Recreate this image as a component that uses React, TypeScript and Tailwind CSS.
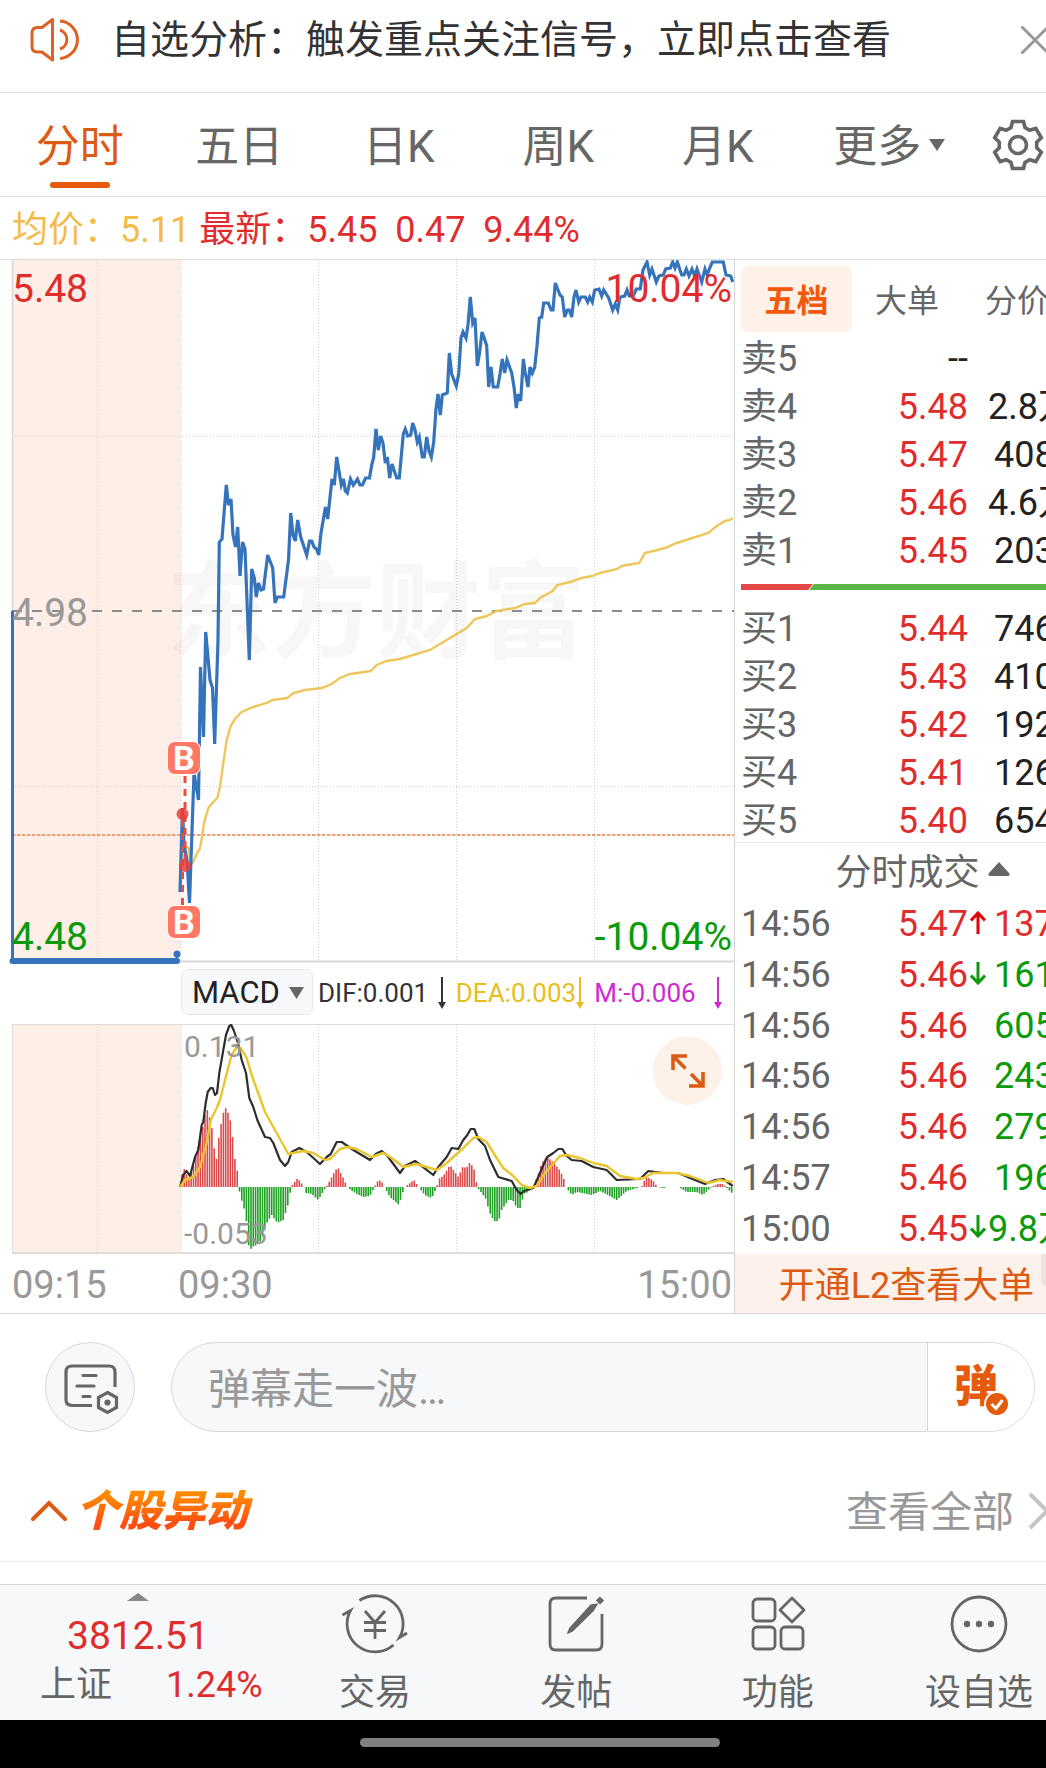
import { useState } from 'react';

interface Quote {
  label: string;
  price: string;
  volume: string;
}

interface Tick {
  time: string;
  price: string;
  volume: string;
  side: 'buy' | 'sell';
  move?: 'up' | 'down';
}

const periods = ['分时', '五日', '日K', '周K', '月K', '更多'];

const asks: Quote[] = [
  { label: '卖5', price: '--', volume: '' },
  { label: '卖4', price: '5.48', volume: '2.8万' },
  { label: '卖3', price: '5.47', volume: '408' },
  { label: '卖2', price: '5.46', volume: '4.6万' },
  { label: '卖1', price: '5.45', volume: '203' },
];

const bids: Quote[] = [
  { label: '买1', price: '5.44', volume: '746' },
  { label: '买2', price: '5.43', volume: '410' },
  { label: '买3', price: '5.42', volume: '192' },
  { label: '买4', price: '5.41', volume: '126' },
  { label: '买5', price: '5.40', volume: '654' },
];

const ticks: Tick[] = [
  { time: '14:56', price: '5.47', volume: '137', side: 'buy', move: 'up' },
  { time: '14:56', price: '5.46', volume: '161', side: 'sell', move: 'down' },
  { time: '14:56', price: '5.46', volume: '605', side: 'sell' },
  { time: '14:56', price: '5.46', volume: '243', side: 'sell' },
  { time: '14:56', price: '5.46', volume: '279', side: 'sell' },
  { time: '14:57', price: '5.46', volume: '196', side: 'sell' },
  { time: '15:00', price: '5.45', volume: '9.8万', side: 'sell', move: 'down' },
];

const indicators = [
  { text: 'DIF:0.001', color: 'text-[#333333]' },
  { text: 'DEA:0.003', color: 'text-[#e8be1c]' },
  { text: 'M:-0.006', color: 'text-[#cc2bd0]' },
];

// Chart series, in chart units: x 0-734, y from the top of each pane
const priceLine =
  '180,632 182.5,548 184,585 187,600 189.5,643 194,513 198.5,540 200.5,407 203.5,477 205.7,372 210,420 212.5,428 214.7,484 218,380 219.3,282 222,279 226.3,225 228.5,245 231,239 233,275 235.5,287 237.7,267 240,316 242.5,282 245,289 249.3,400 251.7,309 254.3,318 256.3,337 258.5,323 261,330 263.5,329 267.7,295 272.7,308 275,343 277.5,337 283.7,337 288.5,300 290.7,253 293,275 295.3,281 297.7,260 300.7,277 306.7,295 309.5,281 311.7,281 314,287 316.5,289 318.7,295 321,273 325.5,247 327.7,259 332,219 334.3,225 336.7,197 341.3,225 343.5,219 345.3,231 347.3,233 350.5,219 353.3,225 357.5,219 360,225 362.5,225 365.5,218 369.5,218 371.7,205 373.7,197 376,169 378.3,190 380.7,176 383,183 385.3,203 387.3,197 389.7,218 392,204 396.7,218 399.3,218 403.3,174 405.3,169 407.7,176 410.7,175 412.7,163 415,170 417.3,182 419.3,177 422.3,197 424.3,197 426.7,177 429,191 431.3,197 433.7,182 436,149 438,134 440.3,155 442.3,135 447.3,133 449.3,93 451.7,114 456.3,126 458.7,114 461,78 463,72 466,78 468,65 470.3,37 472.7,63 475,58 477.3,106 479.7,92 482,72 484.3,78 486.7,86 488.7,127 491,107 493.3,127 497.7,127 500,114 502.3,99 504.7,113 507,100 511.7,113 514,127 516.3,148 518.3,134 520.7,141 523.3,99 525.3,113 528,127 530,107 532.3,113 534.7,107 537,86 539.3,58 541.7,57 543.7,43 548.3,43 551,50 553,50 555.3,23 560,35 562.3,37 564.7,57 567.3,50 569.3,50 571.7,57 574,37 576,30 578.7,42 581,37 585.3,37 587.7,42 589.7,37 592.3,42 594.7,30 599,29 601.7,36 603.7,30 608.7,38 612.7,50 615.3,44 617.7,50 620,37 624.7,36 627,30 629.3,36 633.3,36 636.3,29 640.3,29 643,10 647,2 649.7,15 652,9 656.3,22 659,16 663.3,15 665.7,9 670.3,8 672.7,2 675,8 677.3,2 681.7,15 684,15 686.3,9 689,16 692,9 694.7,16 697,9 701.7,22 705,9 707.3,15 709.7,8 712.3,2 723.3,2 726,15 730.7,16 732.7,22';

const averageLine =
  '185,587 188.5,588 190.5,602 192.7,603 196.7,594 200,588 202,577 204,563 208.3,548 213.3,542 217.3,538 220,527 223.3,503 226.7,480 230.7,466 235,459 241.7,452 253.3,447 266.7,443 272.7,440 287.3,438 293.3,433 305,430 321.7,428 331.7,424 340,418 350,414 370.7,411 376.7,405 386.7,401 400,399 430,390 436.7,386 456.7,374 466.7,368 475,359 486.7,356 496.7,351 515,348 525,344 535,343 540,338 552.7,331 557.3,325 570,322 581.7,318 592.3,316 600,313 617.3,309 621.7,306 639.3,303 645,293 653.3,291 665,288 676.7,283 708.3,273 716.7,266 725,261 730,260 732.7,258';

const difLine =
  '180,163 183.3,151 186.7,147 190,152 195,133 198.3,126 201.7,101 203.3,98 205.7,79 207.7,68 210.7,64 212.7,64 215,71 217,69 219.3,49 223.3,26 226,11 229.3,2 231.3,1 234,7 237.7,18 241.7,36 246,49 249.3,74 253.3,83 257.3,96 265,113 270,114 273.3,119 280,136 285,142 288.3,138 291.7,128 299.3,124 306.7,128 320,140 326.7,133 330.7,130 336.7,118 341.7,118 353.3,126 370,136 375.7,130 381.7,127 386.7,131 400,149 405,142 415,137 421.7,142 433.3,151 438.3,143 446.7,133 451.7,124 458.3,125 463.3,116 467.3,111 470.7,105 474.3,105 478.3,115 485,122 490,136 498.3,153 511.7,157 516.7,166 520.7,170 524,167 533.3,164 538.3,153 543.3,141 547.3,133 553.3,129 558.3,125 562.3,125 566.7,132 571.7,136 581.7,137 593.3,143 606.7,146 616.7,156 640,155 648.3,147 663.3,149 678.3,149 690,154 705,160 715,156 723.3,155 732.7,162';

const deaLine =
  '180,163 185,156 193.3,153 200,143 206.7,119 210.7,96 216.7,84 220,76 225,56 231.7,31 236.7,23 240.7,24 246.7,34 251.7,51 265,88 275,106 288.3,130 303.3,127 313.3,129 325,136 330,135 340,125 346.7,123 356.7,125 371.7,133 383.3,129 391.7,134 403.3,143 416.7,140 436.7,146 446.7,139 456.7,130 463.3,124 473.3,114 478.3,113 486.7,118 496.7,134 503.3,144 513.3,152 521.7,161 530,164 536.7,162 545,149 560,132 566.7,131 580,134 593.3,139 606.7,142 620,152 636.7,155 643.3,154 653.3,149 676.7,149 690,152 708.3,159 720,156 732.7,158';

// Turning points of the MACD histogram: [x, height], the bars between are interpolated
const macdShape: [number, number][] = [
  [181, 8], [183.5, 20], [189, 7], [195, 27], [198, 40], [202.7, 60], [206, 77], [208, 77], [212.7, 55], [215, 30],
  [216.7, 28], [219.3, 54], [223.3, 74], [226.3, 80], [231, 64], [233.3, 44], [235.3, 24], [238, 13], [239, 0],
  [240, -9], [242.7, -16], [245, -25], [247.3, -40], [249.3, -66], [251.7, -60], [257, -58], [261.7, -52],
  [264.3, -44], [266.7, -36], [271.7, -28], [277.3, -36], [283.3, -33], [288.3, -17], [291, 0], [297.7, 9],
  [304, 0], [306, -6], [311.7, -7], [318.3, -13], [324, -3], [326, 0], [328, 3], [333.3, 13], [337.7, 20],
  [343.3, 9], [347.3, 0], [353.3, -5], [363.3, -10], [370, -9], [374.5, 0], [376.7, 5], [380.7, 7], [384.5, 0],
  [390, -10], [399, -18], [403.5, -3], [405, 0], [414, 7], [418.5, 0], [425, -8], [431.7, -11], [435.5, -3],
  [437, 0], [438.3, 8], [443.3, 11], [450, 22], [458.3, 10], [462.7, 20], [466.7, 19], [470, 25], [475, 16],
  [477, 0], [481.7, -6], [486, -12], [489.3, -25], [494, -34], [498.7, -34], [501.7, -23], [508.3, -13],
  [512.7, -13], [516.7, -21], [521, -21], [523.3, -7], [528, -5], [533, 0], [537.3, 10], [541.7, 24], [546.7, 30],
  [551, 27], [558.3, 19], [563.3, 10], [566, 0], [571.7, -8], [576.7, -5], [591.7, -8], [600, -4], [608, -8],
  [616.7, -13], [626.7, -4], [636.7, -1], [641.7, 0], [643.3, 5], [647.3, 10], [653.3, 6], [657.3, 0], [663.3, -1],
  [670, 0], [679, 0], [686.7, -5], [696.7, -5], [702.7, -8], [708.3, -3], [711.7, 0], [716.7, 3], [723.3, 3],
  [726, 0], [730, -4], [733, -7],
];

const histogramHeight = (x: number) => {
  const next = macdShape.findIndex(([px]) => px >= x);
  if (next <= 0) return macdShape[0][1];
  const [x0, h0] = macdShape[next - 1];
  const [x1, h1] = macdShape[next];
  return h0 + ((h1 - h0) * (x - x0)) / (x1 - x0);
};

const bars = Array.from({ length: 240 }, (_, i) => {
  const x = 182 + i * 2.3;
  return { x, height: histogramHeight(x) };
}).filter((bar) => bar.x < 733);

const barPath = (rising: boolean) =>
  bars
    .filter((bar) => (rising ? bar.height > 0.5 : bar.height < -0.5))
    .map((bar) => `M${bar.x.toFixed(1)} 163v${(-bar.height).toFixed(1)}`)
    .join('');

const gridX = [97.5, 181, 318.5, 456.5, 594.5];

function NoticeBar() {
  return (
    <div className="flex h-[93px] items-center overflow-hidden border-b border-[#dcdcdc] pb-3 pl-7">
      <svg width="54" height="46" viewBox="0 0 54 46" fill="none" stroke="#dd6120" strokeWidth="3" className="shrink-0">
        <path d="M24.500 2.500L14 10.500H9.500Q4 10.500 4 16V29.500Q4 35 9.500 35H14L24.500 43Z" strokeLinejoin="round" />
        <path d="M32 13A10 10 0 0 1 32 32M32 4A18.800 18.800 0 0 1 32 41.500" />
      </svg>
      <a href="#analysis" className="ml-[29px] flex-1 whitespace-nowrap text-[39px] leading-[48px] text-[#333333]">
        自选分析：触发重点关注信号，立即点击查看
      </a>
      <button aria-label="关闭" className="-mr-1 shrink-0">
        <svg width="30" height="30" viewBox="0 0 30 30" fill="none" stroke="#999999" strokeWidth="3">
          <path d="M1.500 1.500L28.500 28.500M28.500 1.500L1.500 28.500" />
        </svg>
      </button>
    </div>
  );
}

function PeriodTabs() {
  const [active, setActive] = useState('分时');

  return (
    <div className="flex h-[104px] border-b border-[#dcdcdc]">
      <nav className="flex flex-1 pr-0.5">
        {periods.map((period) => (
          <button
            key={period}
            onClick={() => setActive(period)}
            className={`relative flex flex-1 items-center justify-center pt-1 text-[44px] leading-[48px] ${
              active === period ? 'text-[#dd5a12]' : 'text-[#666666]'
            }`}
          >
            <span className="relative">
              {period}
              {period === '更多' && (
                <svg width="16" height="12" viewBox="0 0 16 12" className="absolute top-4 -right-6 fill-[#666666]">
                  <path d="M0 0H16L8 12Z" />
                </svg>
              )}
            </span>
            {active === period && (
              <span className="absolute bottom-2 h-1.5 w-[60px] rounded-full bg-[#e65a0b]" />
            )}
          </button>
        ))}
      </nav>
      <button aria-label="设置" className="w-[87px] shrink-0 pl-8">
        <svg width="54" height="54" viewBox="-27 -27 54 54" fill="none" stroke="#666666" strokeWidth="3.600">
          <path d="M-5.500-23.500H5.500L7-17.500L11.700-14.800L17.800-16.600L23.300-7.200L18.700-2.700V2.700L23.300 7.200L17.800 16.600L11.700 14.800L7 17.500L5.500 23.500H-5.500L-7 17.500L-11.700 14.800L-17.800 16.600L-23.300 7.200L-18.700 2.700V-2.700L-23.300-7.200L-17.800-16.600L-11.700-14.800L-7-17.500Z" />
          <circle r="8.500" />
        </svg>
      </button>
    </div>
  );
}

function BuyMark() {
  return (
    <span className="flex size-[34px] items-center justify-center rounded-lg border border-white bg-[#ff7866] text-[34px] leading-[34px] font-bold text-white">
      B
    </span>
  );
}

function PriceChart() {
  return (
    <div className="relative h-[708px] overflow-hidden">
      <svg viewBox="0 0 734 708" preserveAspectRatio="none" className="absolute inset-0 size-full">
        <rect x="12" y="0" width="169" height="701" fill="#fdeee7" />
      </svg>
      <div className="absolute inset-x-0 top-[292px] pl-[166px] text-[105px] leading-[124px] font-bold whitespace-nowrap text-black/3">
        东方财富
      </div>
      <svg viewBox="0 0 734 708" preserveAspectRatio="none" className="absolute inset-0 size-full" fill="none">
        <g stroke="#d0d0d0" strokeDasharray="1 2">
          {gridX.map((x) => (
            <path key={x} d={`M${x} 0V701`} />
          ))}
          <path d="M12 176.500H734M12 526.500H734" />
        </g>
        <path d="M12.500 0V701" stroke="#d8d8d8" strokeWidth="1.500" />
        <path d="M12 701.500H734" stroke="#d8d8d8" strokeWidth="2" />
        <path d="M12 351H734" stroke="#8c8c8c" strokeWidth="2" strokeDasharray="10 10" />
        <path d="M12 575H734" stroke="#f0a070" strokeWidth="2" strokeDasharray="3.500 1.500" />
        <polyline points={averageLine} stroke="#efc65c" strokeWidth="2.400" />
        <polyline points={priceLine} stroke="#3574bb" strokeWidth="3.200" />
        <path d="M12.500 351V701" stroke="#3574bb" strokeWidth="3" />
        <path d="M12.500 701H177" stroke="#3574bb" strokeWidth="6" strokeLinecap="round" />
        <path d="M177 701V694" stroke="#3574bb" strokeWidth="2.500" />
        <circle cx="177" cy="694" r="3.500" fill="#3574bb" />
        <g stroke="#ee4b3e" strokeWidth="3" strokeDasharray="7 6">
          <path d="M185 516V606" />
          <path d="M182.500 560V645" />
        </g>
        <circle cx="182.500" cy="554" r="6" fill="#f03c32" fillOpacity="0.850" />
        <circle cx="185" cy="606" r="6" fill="#f03c32" fillOpacity="0.850" />
      </svg>
      <div className="absolute inset-x-0 top-2.5 flex h-[686px] justify-between pr-0.5 pl-3 text-[39px] leading-[38px]">
        <div className="flex flex-col justify-between">
          <span className="text-[#e02c2c]">5.48</span>
          <span className="text-[#999999]">4.98</span>
          <span className="text-[#0a9a0a]">4.48</span>
        </div>
        <div className="flex flex-col items-end justify-between">
          <span className="text-[#e02c2c]">10.04%</span>
          <span className="text-[#0a9a0a]">-10.04%</span>
        </div>
      </div>
      <div className="absolute top-[481px] left-[23%] flex -translate-x-0.5 flex-col gap-[130px]">
        <BuyMark />
        <BuyMark />
      </div>
    </div>
  );
}

function IndicatorRow() {
  return (
    <div className="flex h-14 items-start gap-1 pr-3 pl-[181px]">
      <button className="mt-px flex h-[46px] w-[132px] shrink-0 items-center justify-between rounded-lg border border-[#e6e8ec] bg-[#f7f8fa] pt-0.5 pr-2 pl-2.5 text-[31px] leading-9 text-[#222222]">
        MACD
        <svg width="15" height="12" viewBox="0 0 15 12" fill="#666666">
          <path d="M0 0H15L7.500 12Z" />
        </svg>
      </button>
      <div className="flex h-12 flex-1 gap-2.5 pl-px">
        {indicators.map((item) => (
          <span
            key={item.text}
            className={`flex flex-1 items-center justify-between pt-0.5 whitespace-nowrap text-[26px] leading-9 ${item.color}`}
          >
            {item.text}
            <svg width="8" height="32" viewBox="0 0 8 32" className="shrink-0">
              <path d="M4 0V27" stroke="currentColor" strokeWidth="2" />
              <path d="M0 25H8L4 32Z" fill="currentColor" />
            </svg>
          </span>
        ))}
      </div>
    </div>
  );
}

function MacdChart() {
  return (
    <div className="relative h-[230px]">
      <svg viewBox="0 0 734 230" preserveAspectRatio="none" className="absolute inset-0 size-full" fill="none">
        <rect x="12" y="0" width="169" height="229" fill="#fdeee7" />
        <path d="M12 0.500H734M12.500 0V229" stroke="#dddddd" />
        <path d="M12 229H734" stroke="#dddddd" strokeWidth="2" />
        <g stroke="#d0d0d0" strokeDasharray="1 2">
          {gridX.map((x) => (
            <path key={x} d={`M${x} 0V229`} />
          ))}
        </g>
        <path d={barPath(true)} stroke="#dd4848" strokeWidth="1.600" />
        <path d={barPath(false)} stroke="#1f9f24" strokeWidth="1.600" />
        <polyline points={difLine} stroke="#2e2e2e" strokeWidth="2.200" strokeLinejoin="round" />
        <polyline points={deaLine} stroke="#eac52c" strokeWidth="2.400" strokeLinejoin="round" />
      </svg>
      <div className="absolute top-[5px] bottom-0.5 left-[184px] flex flex-col justify-between text-[30px] leading-9 text-[#999999]">
        <span>0.131</span>
        <span>-0.053</span>
      </div>
      <button
        aria-label="全屏"
        className="absolute top-3 right-3 flex size-[69px] items-center justify-center rounded-full bg-[#fef1ea]"
      >
        <svg width="34" height="34" viewBox="0 0 34 34" fill="none" stroke="#dd5a12" strokeWidth="3.600">
          <path d="M16 2H2V16M2 2L14.500 14.500" />
          <path d="M18 32H32V18M32 32L20 20" />
        </svg>
      </button>
    </div>
  );
}

function QuoteTable({ rows }: { rows: Quote[] }) {
  return (
    <table className="w-full table-fixed text-4xl">
      <tbody>
        {rows.map((row) => (
          <tr key={row.label} className="h-12 leading-[48px]">
            <th scope="row" className="w-[100px] p-0 pl-1.5 text-left font-normal text-[#666666]">
              {row.label}
            </th>
            <td className={`w-[133px] p-0 text-right ${row.price === '--' ? 'text-[#222222]' : 'text-[#e02c2c]'}`}>
              {row.price}
            </td>
            <td className={`p-0 whitespace-nowrap text-[#222222] ${row.volume.endsWith('万') ? 'pl-5' : 'pl-[26px]'}`}>
              {row.volume}
            </td>
          </tr>
        ))}
      </tbody>
    </table>
  );
}

function MoveArrow({ move }: { move: 'up' | 'down' }) {
  return (
    <svg
      width="16"
      height="23"
      viewBox="0 0 16 23"
      fill="none"
      strokeWidth="3"
      className={`absolute top-3 left-0.5 ${move === 'up' ? 'stroke-[#e60000]' : 'stroke-[#0a9a0a]'}`}
    >
      <path d={move === 'up' ? 'M8 23V2M1 9.500L8 2L15 9.500' : 'M8 0V21M1 13.500L8 21L15 13.500'} />
    </svg>
  );
}

function OrderPanel() {
  return (
    <aside className="flex w-[312px] shrink-0 flex-col overflow-hidden border-l border-[#d5d5d5] pt-1.5">
      <div className="flex pl-1.5 text-[32px] leading-[48px] whitespace-nowrap text-[#666666]">
        <button className="h-[66px] w-[111px] shrink-0 rounded-lg bg-[#fff0e8] pt-1 font-bold text-[#f4580b]">五档</button>
        <button className="h-[66px] w-[110px] shrink-0 pt-1">大单</button>
        <button className="h-[66px] w-[110px] shrink-0 pt-1">分价</button>
      </div>
      <div className="mt-[3px]">
        <QuoteTable rows={asks} />
      </div>
      <svg viewBox="0 0 305 6" preserveAspectRatio="none" className="mt-[9px] mb-[15px] ml-1.5 h-1.5 shrink-0">
        <path d="M0 0H72L67 6H0Z" fill="#e64545" />
        <path d="M73 0H305V6H68Z" fill="#5cb646" />
      </svg>
      <div className="-mb-[3px]">
        <QuoteTable rows={bids} />
      </div>
      <button className="flex h-[57px] shrink-0 items-center justify-center gap-2 border-t border-[#e5e5e5] pt-1 pl-[76px] text-4xl whitespace-nowrap text-[#666666]">
        分时成交
        <svg width="22" height="14" viewBox="0 0 22 14" className="mr-3 mb-2 shrink-0" fill="#666666">
          <path d="M11 0L21 11Q23 14 19 14H3Q-1 14 1 11Z" />
        </svg>
      </button>
      <table className="h-[355px] w-full table-fixed text-4xl">
        <tbody>
          {ticks.map((tick, index) => (
            <tr key={index} className="leading-[50px]">
              <td className="w-[100px] p-0 pl-1.5 text-[#666666]">{tick.time}</td>
              <td className="w-[133px] p-0 text-right text-[#e02c2c]">{tick.price}</td>
              <td
                className={`relative p-0 whitespace-nowrap ${tick.volume.endsWith('万') ? 'pl-5' : 'pl-[26px]'} ${
                  tick.side === 'buy' ? 'text-[#e02c2c]' : 'text-[#0a9a0a]'
                }`}
              >
                {tick.move && <MoveArrow move={tick.move} />}
                {tick.volume}
              </td>
            </tr>
          ))}
        </tbody>
      </table>
      <a
        href="#level2"
        className="relative flex flex-1 items-center justify-center bg-[#fdf1eb] pt-1 pl-8 text-4xl whitespace-nowrap text-[#dd5a12]"
      >
        开通L2查看大单
        <span className="absolute top-0 right-0 h-8 w-[5px] rounded-bl-full bg-[#eee4df]" />
      </a>
    </aside>
  );
}

function ChatBar() {
  return (
    <div className="flex gap-9 py-7 pr-[11px] pl-[45px]">
      <button
        aria-label="弹幕设置"
        className="flex size-[90px] shrink-0 items-center justify-center rounded-full border border-[#d5d8df] bg-[#f7f8fa]"
      >
        <svg width="56" height="52" viewBox="0 0 56 52" fill="none" stroke="#666666" strokeWidth="3.200" className="mt-1 ml-0.5">
          <path d="M29 42.500H9Q3 42.500 3 36.500V9Q3 3 9 3H46Q52 3 52 9V24" />
          <path d="M20 12.500H33M14 23H31M20 33.500H27" strokeLinecap="round" />
          <path d="M44.500 29.500L53.500 34.500V44.500L44.500 49.500L35.500 44.500V34.500Z" />
          <circle cx="44.500" cy="39.500" r="1.500" />
        </svg>
      </button>
      <div className="flex h-[90px] min-w-0 flex-1 overflow-hidden rounded-full border border-[#d5d8df] bg-[#f7f8fa]">
        <input
          aria-label="弹幕"
          placeholder="弹幕走一波…"
          className="min-w-0 flex-1 bg-transparent pt-1 pl-9 text-[42px] text-[#333333] outline-none placeholder:text-[#999999]"
        />
        <button className="flex w-[107px] shrink-0 items-center border-l border-[#d5d8df] bg-white pl-[26px]">
          <span className="relative text-[44px] leading-[48px] font-black text-[#e65a0b]">
            弹
            <svg width="26" height="26" viewBox="0 0 26 26" fill="none" className="absolute -right-3 -bottom-1.5">
              <circle cx="13" cy="13" r="12" fill="#e65a0b" stroke="#ffffff" strokeWidth="2" />
              <path d="M7.500 13L12 17.500L18.500 9" stroke="#ffffff" strokeWidth="3" />
            </svg>
          </span>
        </button>
      </div>
    </div>
  );
}

function MovesHeader() {
  return (
    <div className="flex h-[102px] items-center justify-between overflow-hidden border-b border-[#ebebeb] pl-[30px] whitespace-nowrap">
      <h2 className="flex items-center gap-2">
        <svg width="38" height="24" viewBox="0 0 38 24" fill="none" stroke="#dd5a12" strokeWidth="4" strokeLinecap="round">
          <path d="M3 20L19 4L35 20" />
        </svg>
        <span className="bg-gradient-to-b from-[#ff8a00] from-20% to-[#ff4f10] to-70% bg-clip-text pr-2 text-[43px] leading-[56px] font-black text-transparent italic">
          个股异动
        </span>
      </h2>
      <a href="#moves" className="-mr-1 flex items-center gap-3.5 text-[42px] leading-[56px] text-[#999999]">
        <span className="pt-1">查看全部</span>
        <svg width="22" height="38" viewBox="0 0 22 38" fill="none" stroke="#c4c4c4" strokeWidth="4">
          <path d="M2 2L19 19L2 36" />
        </svg>
      </a>
    </div>
  );
}

const actions = [
  {
    label: '交易',
    icon: (
      <>
        <path d="M17.500 6.500A28 28 0 0 1 57.500 43.500L65 39" />
        <path d="M51.500 51A28 28 0 0 1 8.500 16.500L0.500 21" />
        <path d="M23 17L33 28.500L43 17M33 28.500V45M22 28.500H44M22 36.500H44" />
      </>
    ),
  },
  {
    label: '发帖',
    icon: (
      <>
        <path d="M44 4H13Q7 4 7 10V50Q7 56 13 56H53Q59 56 59 50V20" />
        <path d="M53.500 10.500L50 16.500L29 37L25.500 38.500L27 34.500L48 11.500Z" fill="#666666" strokeWidth="2" />
        <path d="M55 8.500L59 4.500" strokeWidth="6" />
      </>
    ),
  },
  {
    label: '功能',
    icon: (
      <>
        <rect x="8" y="5" width="22" height="22" rx="4" />
        <rect x="8" y="33" width="22" height="22" rx="4" />
        <rect x="36" y="33" width="22" height="22" rx="4" />
        <path d="M47 4L59 16L47 28L35 16Z" strokeLinejoin="round" />
      </>
    ),
  },
  {
    label: '设自选',
    icon: (
      <>
        <circle cx="33" cy="30" r="27" />
        <g fill="#666666" stroke="none">
          <circle cx="21" cy="30" r="3.200" />
          <circle cx="33" cy="30" r="3.200" />
          <circle cx="45" cy="30" r="3.200" />
        </g>
      </>
    ),
  },
];

function BottomNav() {
  return (
    <nav className="mt-[22px] flex h-[136px] border-t border-[#d5d8df] bg-[#f7f8fa]">
      <button className="flex w-[321px] shrink-0 flex-col items-start pt-2 pl-10 text-[#e02c2c]">
        <svg width="22" height="8" viewBox="0 0 22 8" fill="#888888" className="ml-[87px]">
          <path d="M0 8L11 0L22 8Z" />
        </svg>
        <span className="mt-3 ml-[27px] text-[39px] leading-[46px]">3812.51</span>
        <span className="mt-[3px] flex gap-[54px] text-4xl leading-[46px]">
          <span className="text-[#666666]">上证</span>
          <span>1.24%</span>
        </span>
      </button>
      <div className="flex flex-1 justify-between pr-[13px]">
        {actions.map((action) => (
          <button
            key={action.label}
            className="flex w-[108px] shrink-0 flex-col items-center gap-[13px] pt-[9px] text-4xl leading-[52px] whitespace-nowrap text-[#666666]"
          >
            <svg width="66" height="60" viewBox="0 0 66 60" fill="none" stroke="#666666" strokeWidth="2.800" className="shrink-0 overflow-visible">
              {action.icon}
            </svg>
            {action.label}
          </button>
        ))}
      </div>
    </nav>
  );
}

export default function App() {
  return (
    <div
      lang="zh-CN"
      className="overflow-hidden bg-white font-[Roboto,'Noto_Sans_CJK_SC',sans-serif]"
    >
      <NoticeBar />
      <PeriodTabs />
      <div className="flex h-[63px] items-center gap-[9px] border-b border-[#dcdcdc] pt-1 pl-3 text-4xl whitespace-pre">
        <span className="text-[#f3bc48]">均价：5.11</span>
        <span className="text-[#e02c2c]">最新：5.45  0.47  9.44%</span>
      </div>
      <section className="flex border-b border-[#d5d8df]">
        <div className="min-w-0 flex-1">
          <PriceChart />
          <IndicatorRow />
          <MacdChart />
          <div className="flex h-[59px] items-center pt-1 pr-0.5 pl-3 text-[38px] text-[#999999]">
            <span className="w-[166px]">09:15</span>
            <span className="flex-1">09:30</span>
            <span>15:00</span>
          </div>
        </div>
        <OrderPanel />
      </section>
      <ChatBar />
      <MovesHeader />
      <BottomNav />
      <div className="flex h-12 items-center justify-center bg-black pb-1 pl-[34px]">
        <span className="h-[9px] w-[360px] rounded-full bg-[#808080]" />
      </div>
    </div>
  );
}
